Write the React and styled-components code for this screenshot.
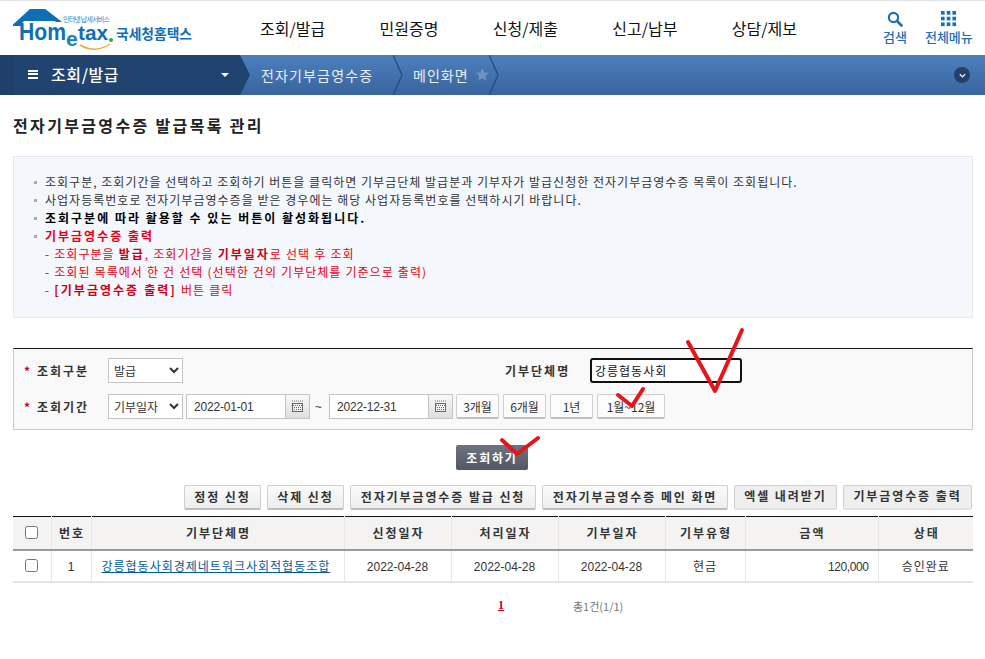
import React from 'react';
import styled, { createGlobalStyle } from 'styled-components';

const KR = '"Noto Sans CJK KR", "Liberation Sans", sans-serif';

const Global = createGlobalStyle`
  html, body { margin: 0; padding: 0; background: #fff; overflow: hidden; }
  body { font-family: ${KR}; font-size: 12px; color: #333; }
  * { box-sizing: border-box; }
`;

const Page = styled.div`
  position: relative;
  width: 985px;
  height: 659px;
  overflow: hidden;
`;

const Header = styled.header`
  height: 55px;
  border-top: 1px solid #e2e2e2;
  display: flex;
  align-items: center;
  position: relative;
`;
const LogoBox = styled.div`
  width: 260px;
  height: 54px;
  flex: none;
`;
const Nav = styled.nav`
  display: flex;
  width: 537px;
  justify-content: space-between;
  font-size: 16px;
  color: #111;
  flex: none;
  margin-top: 0;
`;
const NavItem = styled.a`
  display: block;
  text-align: center;
  white-space: nowrap;
  line-height: 22px;
`;
const Tools = styled.div`
  margin-left: 86px;
  display: flex;
  gap: 18px;
  flex: none;
`;
const Tool = styled.div`
  display: flex;
  flex-direction: column;
  align-items: center;
  gap: 1px;
  color: #1a6fb5;
  font-size: 13px;
  line-height: 18px;
  font-weight: 500;
  white-space: nowrap;
  svg { display: block; }
`;

const Bar = styled.div`
  height: 40px;
  background: linear-gradient(#4c80bc, #38649f);
  display: flex;
  align-items: stretch;
  position: relative;
  color: #e9f0f8;
`;
const Menu = styled.div`
  width: 250px;
  flex: none;
  background: #21436f;
  clip-path: polygon(0 0, 240px 0, 250px 50%, 240px 100%, 0 100%);
  display: flex;
  align-items: center;
  color: #fff;
  font-size: 16px;
  font-weight: 500;
  letter-spacing: 0.6px;
  position: relative;
  border-left: 13px solid #1f406b;
  padding: 0 0 2px 15px;
`;
const Burger = styled.span`
  width: 10px;
  height: 9px;
  border-top: 2px solid #fff;
  border-bottom: 2px solid #fff;
  position: relative;
  margin-right: 13px;
  &::after {
    content: '';
    position: absolute;
    left: 0;
    right: 0;
    top: 1.5px;
    height: 2px;
    background: #fff;
  }
`;
const Caret = styled.span`
  position: absolute;
  left: 208px;
  top: 18px;
  width: 0;
  height: 0;
  border-left: 4px solid transparent;
  border-right: 4px solid transparent;
  border-top: 4px solid #fff;
`;
const Crumb = styled.div`
  display: flex;
  align-items: center;
  font-size: 14px;
  width: ${p => p.$w}px;
  flex: none;
  padding: 0 0 1px ${p => p.$pl}px;
  white-space: nowrap;
  letter-spacing: ${p => p.$ls}px;
`;
const Sep = styled.svg`
  width: 10px;
  height: 40px;
  flex: none;
`;
const Expand = styled.span`
  position: absolute;
  right: 15px;
  top: 12px;
  width: 16px;
  height: 16px;
  border-radius: 50%;
  background: #263f68;
  display: flex;
  align-items: center;
  justify-content: center;
`;

const Main = styled.main`
  padding: 0 12px 0 13px;
`;
const Title = styled.h1`
  margin: 19px 0 20px;
  font-size: 16px;
  line-height: 22px;
  font-weight: 700;
  color: #222;
  letter-spacing: 2.35px;
`;
const Info = styled.div`
  height: 162px;
  background: #f4f7fc;
  border: 1px solid #e3e8f1;
  padding: 16px 31px 0 19px;
`;
const Line = styled.div`
  position: relative;
  height: 18px;
  line-height: 18px;
  font-size: 12px;
  padding-left: 12px;
  color: ${p => (p.$red ? '#e60012' : '#333')};
  font-weight: ${p => (p.$bold ? 700 : 400)};
  ${p => p.$dark && 'color:#000;'}
  white-space: nowrap;
  letter-spacing: ${p => (p.$bold ? 2 : 1.02)}px;
  ${p => p.$sub && 'word-spacing: 0.4px;'}
  ${p => !p.$sub && `&::before {
    content: '';
    position: absolute;
    left: 1px;
    top: 8px;
    width: 3px;
    height: 3px;
    background: #aaa;
  }`}
`;
const Strong = styled.b`
  font-weight: 700;
  color: #c8001a;
  letter-spacing: 2px;
`;

const Search = styled.section`
  margin-top: 30px;
  height: 82px;
  border-top: 1px solid #111;
  border-left: 1px solid #ccc;
  border-right: 1px solid #ccc;
  border-bottom: 1px solid #ccc;
  background: #f9f9f9;
  padding: 9px 0 0 10px;
  display: flex;
  flex-direction: column;
  gap: 11px;
`;
const Row = styled.div`
  display: flex;
  align-items: center;
  height: 25px;
`;
const Label = styled.label`
  width: 84px;
  flex: none;
  font-weight: 700;
  font-size: 12px;
  color: #333;
  letter-spacing: 2px;
  white-space: nowrap;
  &::before {
    content: '*';
    color: #c8001a;
    font-weight: 700;
    display: inline-block;
    width: 13px;
    letter-spacing: 0;
  }
`;
const Select = styled.select`
  width: 75px;
  height: 25px;
  flex: none;
  border: 1px solid #c4c4c4;
  background: #fff;
  font-family: ${KR};
  font-size: 12px;
  color: #333;
  padding: 0 0 0 1px;
  border-radius: 0;
`;
const NameLabel = styled.span`
  margin-left: 322px;
  width: 85px;
  flex: none;
  font-weight: 700;
  font-size: 12px;
  letter-spacing: 2px;
  color: #333;
  white-space: nowrap;
`;
const NameInput = styled.input`
  width: 152px;
  height: 25px;
  flex: none;
  border: 2px solid #111;
  border-radius: 3px;
  background: #fff;
  font-family: ${KR};
  font-size: 12px;
  letter-spacing: 1px;
  color: #111;
  padding: 0 3px;
  outline: none;
`;
const DateInput = styled.input`
  width: 99px;
  height: 25px;
  flex: none;
  margin-left: ${p => p.$ml ?? 3}px;
  border: 1px solid #c4c4c4;
  border-right: 0;
  background: #fff;
  font-family: "Liberation Sans", sans-serif;
  font-size: 12px;
  letter-spacing: -0.2px;
  color: #333;
  padding: 0 7px;
  outline: none;
`;
const CalBtn = styled.button`
  width: 25px;
  height: 25px;
  flex: none;
  padding: 0;
  border: 1px solid #c4c4c4;
  background: linear-gradient(#f8f8f8, #dedede);
  display: flex;
  align-items: center;
  justify-content: center;
`;
const Tilde = styled.span`
  width: 19px;
  flex: none;
  padding-right: 2px;
  text-align: center;
  font-family: "Liberation Sans", sans-serif;
  color: #444;
`;
const Period = styled.button`
  height: 25px;
  width: ${p => p.$w}px;
  flex: none;
  margin-left: ${p => p.$ml ?? 4}px;
  padding: 0;
  border: 1px solid #cfcfcf;
  border-bottom: 2px solid #c0c0c0;
  border-radius: 2px;
  background: #fcfcfc;
  font-family: ${KR};
  font-size: 12px;
  color: #333;
  white-space: nowrap;
`;

const SubmitRow = styled.div`
  display: flex;
  justify-content: center;
  margin-top: 15px;
  padding-right: 2px;
`;
const Submit = styled.button`
  width: 72px;
  height: 25px;
  padding: 0;
  border: 0;
  border-radius: 2px;
  background: linear-gradient(#6d7480, #525965);
  color: #fff;
  font-family: ${KR};
  font-size: 12px;
  font-weight: 700;
  letter-spacing: 1.8px;
`;

const Actions = styled.div`
  display: flex;
  justify-content: flex-end;
  gap: 6px;
  margin-top: 15px;
  height: 25px;
  padding-right: 1px;
`;
const Action = styled.button`
  width: ${p => p.$w}px;
  height: 25px;
  flex: none;
  padding: 0 0 ${p => (p.$off ? 3 : 1)}px;
  border: 1px solid #cfcfcf;
  border-bottom: 2px solid ${p => (p.$off ? '#e2e2e2' : '#bdbdbd')};
  border-radius: 2px;
  background: ${p => (p.$off ? '#efefef' : 'linear-gradient(#fbfbfb, #ededed)')};
  font-family: ${KR};
  font-size: 12px;
  font-weight: 700;
  color: #333;
  letter-spacing: 1.9px;
  white-space: nowrap;
`;

const Table = styled.table`
  margin-top: 6px;
  width: 960px;
  table-layout: fixed;
  border-collapse: collapse;
  border-top: 1px solid #111;
  border-bottom: 2px solid #e4e4e4;
`;
const Th = styled.th`
  height: 33px;
  padding: 0 0 0 2px;
  background: #f4f3f1;
  border-left: 1px solid #e6e6e6;
  border-bottom: 2px solid #999;
  font-size: 12px;
  font-weight: 700;
  color: #333;
  letter-spacing: 2px;
  &:first-child { border-left: 0; padding: 0; }
`;
const Td = styled.td`
  height: 32px;
  padding: ${p => (p.$right ? '0 9px 0 0' : p.$left ? '0 0 0 10px' : '0')};
  border-left: 1px solid #e6e6e6;
  text-align: ${p => (p.$right ? 'right' : p.$left ? 'left' : 'center')};
  font-size: 12px;
  color: #333;
  white-space: nowrap;
  letter-spacing: 1px;
  &:first-child { border-left: 0; }
`;
const Num = styled.span`
  font-family: "Liberation Sans", sans-serif;
  letter-spacing: ${p => p.$ls ?? 0}px;
`;
const Check = styled.input`
  appearance: none;
  display: block;
  margin: 0 auto;
  width: 13px;
  height: 13px;
  border: 1px solid #767676;
  border-radius: 2.5px;
  background: #fff;
`;
const Link = styled.a`
  color: #005b9a;
  text-decoration: underline;
  letter-spacing: 1px;
`;

const Pager = styled.div`
  display: flex;
  margin-top: 14px;
  height: 18px;
  align-items: center;
  padding-left: 485px;
`;
const PageNo = styled.a`
  font-family: "Liberation Serif", serif;
  font-size: 12px;
  font-weight: 700;
  color: #c8001a;
  text-decoration: underline;
  width: 75px;
  flex: none;
`;
const Total = styled.span`
  font-size: 11px;
  color: #777;
`;

const Marks = styled.svg`
  position: absolute;
  left: 0;
  top: 0;
  width: 985px;
  height: 659px;
  pointer-events: none;
`;

const Logo = () => (
  <svg width="260" height="54" viewBox="0 0 260 54">
    <path d="M13 23.5 L30 8 H45 L62 21 L56 21 L44 12 H33 L21 23 V25 H13 Z" fill="#0e6fb6" />
    <path d="M30 8 H45 L60 20 H22 Z" fill="#0e6fb6" />
    <text x="63" y="21" fontSize="7" fill="#2f7fbf" fontFamily={KR} textLength="47">인터넷 납세서비스</text>
    <text x="19" y="39" fontSize="23" fontWeight="700" fill="#0e6fb6" fontFamily='"Liberation Sans", sans-serif' textLength="47" lengthAdjust="spacingAndGlyphs">Hom</text>
    <text x="66" y="45" fontSize="21" fontWeight="700" fill="#1483b8" fontFamily='"Liberation Sans", sans-serif'>e</text>
    <text x="78" y="39" fontSize="21" fontWeight="700" fill="#0e6fb6" fontFamily='"Liberation Sans", sans-serif' textLength="30" lengthAdjust="spacingAndGlyphs">tax</text>
    <circle cx="111" cy="39" r="2" fill="#2aa84a" />
    <path d="M80 44 Q95 53 110 43" fill="none" stroke="#f2a93b" strokeWidth="1.5" />
    <text x="116" y="38" fontSize="13.5" fontWeight="700" fill="#0e6fb6" fontFamily={KR} textLength="76" lengthAdjust="spacingAndGlyphs">국세청홈택스</text>
  </svg>
);

const Cal = () => (
  <svg width="13" height="13" viewBox="0 0 13 13">
    <path d="M1 1h11" stroke="#777" strokeDasharray="1 1" fill="none" />
    <rect x="1.5" y="3.5" width="10" height="8" fill="#f4f4f4" stroke="#666" />
    <path d="M2 5.5h9M3 7.5h7M3 9.5h7" stroke="#666" strokeDasharray="1 1" fill="none" />
  </svg>
);

const Chevron = () => (
  <Sep viewBox="0 0 10 40">
    <path d="M0 0 L9 20 L0 40" fill="none" stroke="#224c80" strokeWidth="1.3" />
  </Sep>
);

const cols = [38, 40, 253, 107, 107, 107, 80, 133, 95];

export default function App() {
  return (
    <Page>
      <Global />
      <Header>
        <LogoBox><Logo /></LogoBox>
        <Nav>
          <NavItem>조회/발급</NavItem>
          <NavItem>민원증명</NavItem>
          <NavItem>신청/제출</NavItem>
          <NavItem>신고/납부</NavItem>
          <NavItem>상담/제보</NavItem>
        </Nav>
        <Tools>
          <Tool>
            <svg width="16" height="16" viewBox="0 0 16 16">
              <circle cx="6.5" cy="6.5" r="4.6" fill="none" stroke="#1a6fb5" strokeWidth="2.2" />
              <path d="M10 10 L14.5 14.5" stroke="#1a6fb5" strokeWidth="2.6" strokeLinecap="round" />
            </svg>
            검색
          </Tool>
          <Tool>
            <svg width="16" height="16" viewBox="0 0 14 14">
              {[0, 5, 10].flatMap(y => [0, 5, 10].map(x => (
                <rect key={`${x}-${y}`} x={x} y={y} width="3.2" height="3.2" fill="#1a6fb5" />
              )))}
            </svg>
            전체메뉴
          </Tool>
        </Tools>
      </Header>

      <Bar>
        <Menu>
          <Burger />
          조회/발급
          <Caret />
        </Menu>
        <Crumb $w={143} $pl={11} $ls={1.15}>전자기부금영수증</Crumb>
        <Chevron />
        <Crumb $w={86} $pl={10} $ls={1}>
          메인화면
          <svg width="15" height="15" viewBox="0 0 24 24" style={{ marginLeft: 6 }}>
            <path d="M12 1.5l3.2 7 7.6.8-5.7 5.1 1.6 7.5L12 18.1l-6.7 3.8 1.6-7.5-5.7-5.1 7.6-.8z" fill="#6f92be" />
          </svg>
        </Crumb>
        <Chevron />
        <Expand>
          <svg width="9" height="9" viewBox="0 0 10 10">
            <path d="M2 3.5 L5 6.5 L8 3.5" fill="none" stroke="#dfe6f0" strokeWidth="1.5" />
          </svg>
        </Expand>
      </Bar>

      <Main>
        <Title>전자기부금영수증 발급목록 관리</Title>
        <Info>
          <Line>조회구분, 조회기간을 선택하고 조회하기 버튼을 클릭하면 기부금단체 발급분과 기부자가 발급신청한 전자기부금영수증 목록이 조회됩니다.</Line>
          <Line>사업자등록번호로 전자기부금영수증을 받은 경우에는 해당 사업자등록번호를 선택하시기 바랍니다.</Line>
          <Line $bold $dark>조회구분에 따라 활용할 수 있는 버튼이 활성화됩니다.</Line>
          <Line $bold $red>기부금영수증 출력</Line>
          <Line $sub $red>- 조회구분을 <Strong>발급</Strong>, 조회기간을 <Strong>기부일자</Strong>로 선택 후 조회</Line>
          <Line $sub $red>- 조회된 목록에서 한 건 선택 (선택한 건의 기부단체를 기준으로 출력)</Line>
          <Line $sub $red>- <Strong>[기부금영수증 출력]</Strong> 버튼 클릭</Line>
        </Info>

        <Search>
          <Row>
            <Label>조회구분</Label>
            <Select defaultValue="발급">
              <option>발급</option>
            </Select>
            <NameLabel>기부단체명</NameLabel>
            <NameInput defaultValue="강릉협동사회" />
          </Row>
          <Row>
            <Label>조회기간</Label>
            <Select defaultValue="기부일자">
              <option>기부일자</option>
            </Select>
            <DateInput defaultValue="2022-01-01" />
            <CalBtn><Cal /></CalBtn>
            <Tilde>~</Tilde>
            <DateInput $ml={0} defaultValue="2022-12-31" />
            <CalBtn><Cal /></CalBtn>
            <Period $w={43} $ml={3}>3개월</Period>
            <Period $w={43}>6개월</Period>
            <Period $w={43}>1년</Period>
            <Period $w={68}>1월~12월</Period>
          </Row>
        </Search>

        <SubmitRow>
          <Submit>조회하기</Submit>
        </SubmitRow>

        <Actions>
          <Action $w={77}>정정 신청</Action>
          <Action $w={77}>삭제 신청</Action>
          <Action $w={186}>전자기부금영수증 발급 신청</Action>
          <Action $w={186}>전자기부금영수증 메인 화면</Action>
          <Action $w={103} $off>엑셀 내려받기</Action>
          <Action $w={129} $off>기부금영수증 출력</Action>
        </Actions>

        <Table>
          <colgroup>
            {cols.map((w, i) => <col key={i} style={{ width: w }} />)}
          </colgroup>
          <thead>
            <tr>
              <Th><Check type="checkbox" /></Th>
              <Th>번호</Th>
              <Th>기부단체명</Th>
              <Th>신청일자</Th>
              <Th>처리일자</Th>
              <Th>기부일자</Th>
              <Th>기부유형</Th>
              <Th>금액</Th>
              <Th>상태</Th>
            </tr>
          </thead>
          <tbody>
            <tr>
              <Td><Check type="checkbox" /></Td>
              <Td><Num>1</Num></Td>
              <Td $left><Link>강릉협동사회경제네트워크사회적협동조합</Link></Td>
              <Td><Num>2022-04-28</Num></Td>
              <Td><Num>2022-04-28</Num></Td>
              <Td><Num>2022-04-28</Num></Td>
              <Td>현금</Td>
              <Td $right><Num $ls={-0.4}>120,000</Num></Td>
              <Td>승인완료</Td>
            </tr>
          </tbody>
        </Table>

        <Pager>
          <PageNo>1</PageNo>
          <Total>총1건(1/1)</Total>
        </Pager>
      </Main>

      <Marks viewBox="0 0 985 659">
        <g fill="none" stroke="#e8141c" strokeLinecap="round" strokeLinejoin="round">
          <path d="M688 342 L715 391 L742 330" strokeWidth="4" />
          <path d="M618 395 L632 406 L643 389" strokeWidth="4" />
          <path d="M502 440 L517 454 L538 438" strokeWidth="4" />
        </g>
      </Marks>
    </Page>
  );
}
